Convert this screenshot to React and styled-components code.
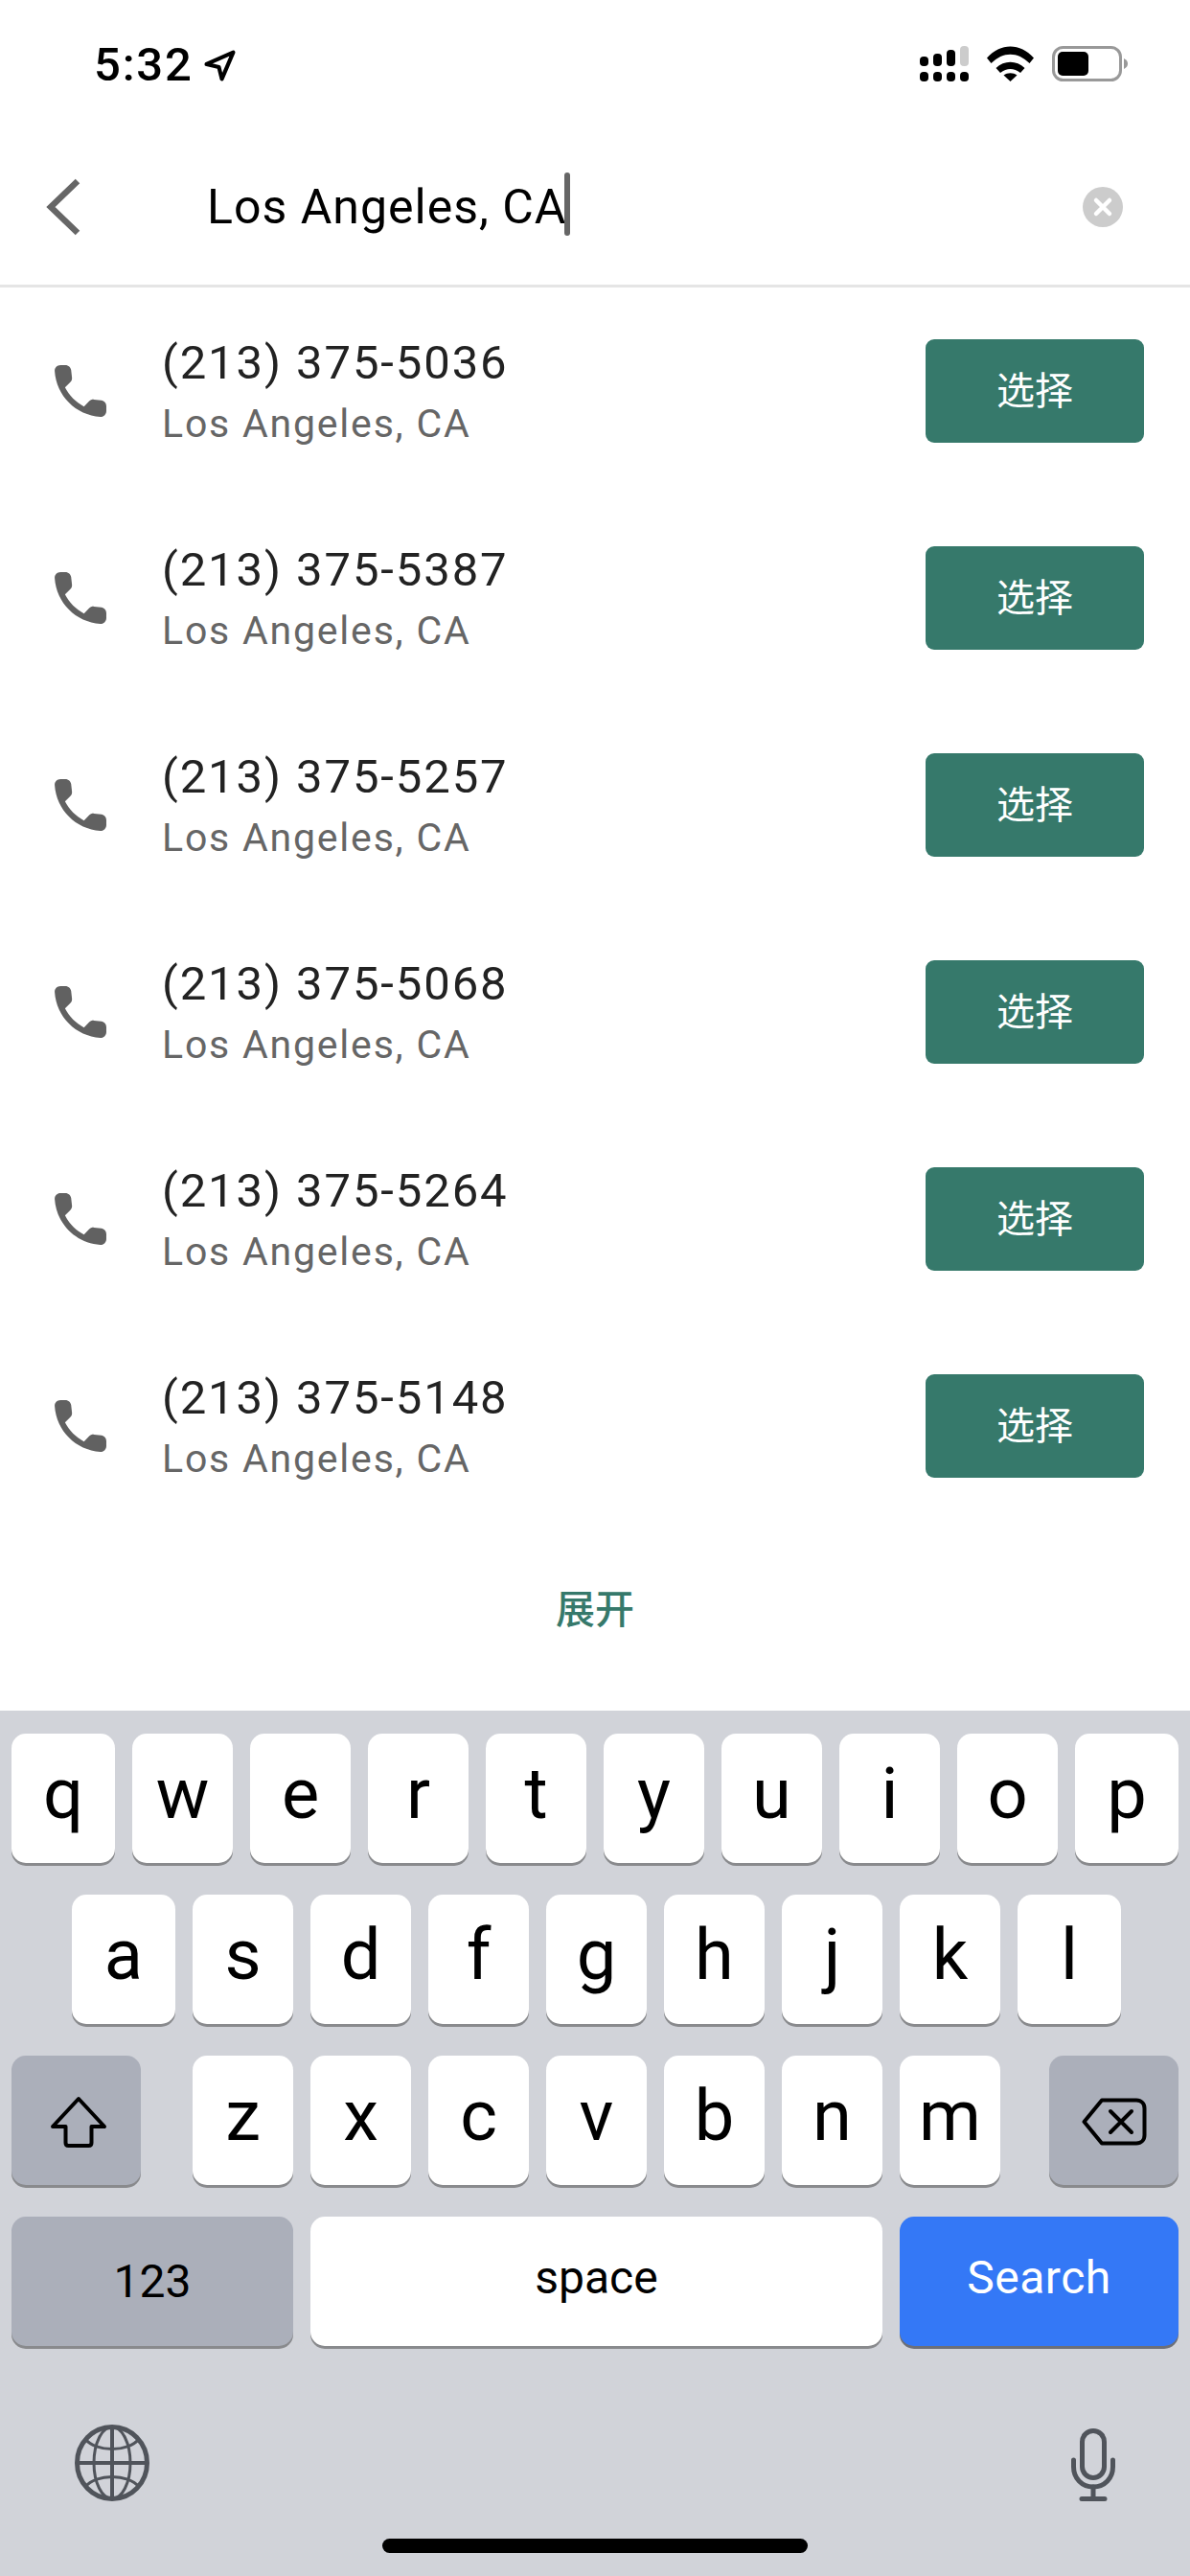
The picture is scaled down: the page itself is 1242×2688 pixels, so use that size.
import React from "react";
import styled, { createGlobalStyle } from "styled-components";

const Global = createGlobalStyle`
  html, body { margin: 0; padding: 0; background: #fff; }
  * { box-sizing: border-box; }
`;

const FONT = `Roboto, "Noto Sans CJK SC", sans-serif`;

const Screen = styled.div`
  width: 1242px;
  height: 2688px;
  display: flex;
  flex-direction: column;
  background: #fff;
  font-family: ${FONT};
  overflow: hidden;
`;

const StatusBar = styled.div`
  height: 134px;
  flex: none;
  padding: 0 65px 0 98px;
  display: flex;
  align-items: flex-start;
  justify-content: space-between;
`;
const TimeGroup = styled.div`
  display: flex;
  align-items: center;
  gap: 11px;
  margin-top: 41px;
  height: 54px;
`;
const Time = styled.span`
  font-size: 49px;
  font-weight: 500;
  line-height: 54px;
  color: #000;
  letter-spacing: 1.8px;
`;
const StatusIcons = styled.div`
  display: flex;
  align-items: flex-start;
  margin-top: 48px;
  gap: 19px;
`;

const Header = styled.div`
  height: 166px;
  flex: none;
  border-bottom: 3px solid #e5e5e5;
  display: flex;
  align-items: center;
  padding: 0 70px 0 48px;
`;
const SearchField = styled.div`
  flex: 1;
  margin-left: 132px;
  display: flex;
  align-items: center;
  font-size: 50px;
  line-height: 66px;
  letter-spacing: 1px;
  color: #000;
`;
const Caret = styled.span`
  width: 6px;
  height: 66px;
  border-radius: 3px;
  background: #666;
  flex: none;
  margin: 0 0 6px -2px;
`;

const List = styled.div`
  display: flex;
  flex-direction: column;
`;
const Row = styled.div`
  height: 216px;
  display: flex;
  align-items: center;
  padding: 0 48px;
`;
const Info = styled.div`
  flex: 1;
  margin-left: 49px;
  padding-top: 2px;
  display: flex;
  flex-direction: column;
  gap: 8px;
`;
const Phone = styled.div`
  font-size: 49px;
  line-height: 58px;
  color: #222;
  letter-spacing: 1.9px;
`;
const Place = styled.div`
  font-size: 41px;
  line-height: 52px;
  color: #666;
  letter-spacing: 1.8px;
`;
const Choose = styled.div`
  width: 228px;
  height: 108px;
  border-radius: 9px;
  background: #36796b;
  color: #fff;
  font-size: 40px;
  padding-bottom: 7px;
  display: flex;
  align-items: center;
  justify-content: center;
`;
const More = styled.div`
  flex: 1;
  display: flex;
  justify-content: center;
  padding-top: 54px;
  font-size: 41px;
  font-weight: 500;
  line-height: 60px;
  color: #36796b;
`;

const Keyboard = styled.div`
  height: 903px;
  flex: none;
  background: #d1d3d9;
  padding: 24px 12px 0;
  display: flex;
  flex-direction: column;
  gap: 33px;
`;
const KeyRow = styled.div`
  display: flex;
  gap: 18px;
  height: 135px;
  padding-left: ${(p) => p.$inset || 0}px;
`;
const Key = styled.div`
  width: ${(p) => p.$w || 105}px;
  margin-right: ${(p) => p.$after || 0}px;
  height: 135px;
  flex: none;
  border-radius: 15px;
  background: ${(p) => (p.$tone === "dark" ? "#abafba" : p.$tone === "blue" ? "#3478f6" : "#fff")};
  color: ${(p) => (p.$tone === "blue" ? "#fff" : "#000")};
  box-shadow: 0 3px 0 ${(p) => (p.$tone === "blue" ? "#6c6f78" : "#898a8d")};
  display: flex;
  align-items: center;
  justify-content: center;
  font-size: ${(p) => p.$size || 74}px;
  font-weight: 400;
  letter-spacing: ${(p) => p.$track || 0}px;
  line-height: 1;
  padding-bottom: ${(p) => p.$lift ?? 10}px;
`;
const BottomRow = styled.div`
  margin-top: 49px;
  height: 80px;
  display: flex;
  justify-content: space-between;
  align-items: flex-end;
  padding: 0 66px;
`;
const HomeBar = styled.div`
  width: 444px;
  height: 15px;
  border-radius: 8px;
  background: #000;
  align-self: center;
  margin-top: 6px;
`;

const LocationArrow = () => (
  <svg width="33" height="33" viewBox="0 0 32 32">
    <path d="M2.5 14.5 L29.5 2.5 L18 29.5 L15 17.5 Z" fill="none" stroke="#000" strokeWidth="4" strokeLinejoin="round" />
  </svg>
);

const Signal = () => (
  <svg width="51" height="37" viewBox="0 0 51 37">
    <rect x="0" y="11" width="9" height="10" rx="4" />
    <rect x="14" y="8" width="9" height="13" rx="4" />
    <rect x="28" y="4" width="9" height="17" rx="4" />
    <rect x="42" y="0" width="9" height="21" rx="4" fill="#ccc" />
    <rect x="0" y="27" width="9" height="10" rx="4" />
    <rect x="14" y="27" width="9" height="10" rx="4" />
    <rect x="28" y="27" width="9" height="10" rx="4" />
    <rect x="42" y="27" width="9" height="10" rx="4" />
  </svg>
);

const Wifi = () => (
  <svg width="49" height="37" viewBox="0 0 49 37">
    <path d="M0 12.5 C14 -3.5 35 -3.5 49 12.5 L44.5 18 C32 5.5 17 5.5 4.5 18 Z" />
    <path d="M9.5 23 C18 14.5 31 14.5 39.5 23 L35 28 C28 22.5 21 22.5 14 28 Z" />
    <path d="M17.5 30.5 C21.5 27.5 27.5 27.5 31.5 30.5 L24.5 37 Z" />
  </svg>
);

const Battery = () => (
  <svg width="79" height="37" viewBox="0 0 79 37">
    <rect x="1.5" y="1.5" width="70" height="34" rx="10" fill="none" stroke="#999" strokeWidth="3" />
    <rect x="6" y="6" width="32" height="25" rx="5" fill="#000" />
    <path d="M75 13 C78 14.5 79 16.5 79 18.5 C79 20.5 78 22.5 75 24 Z" fill="#999" />
  </svg>
);

const Back = () => (
  <svg width="36" height="60" viewBox="0 0 36 60">
    <path d="M33 3 L5 30 L33 57" fill="none" stroke="#666" strokeWidth="6.5" />
  </svg>
);

const Clear = () => (
  <svg width="42" height="42" viewBox="0 0 42 42">
    <circle cx="21" cy="21" r="21" fill="#ccc" />
    <path d="M14 14 L28 28 M28 14 L14 28" stroke="#fff" strokeWidth="4.5" strokeLinecap="round" />
  </svg>
);

const Call = () => (
  <svg width="72" height="72" viewBox="0 0 24 24" fill="#616161">
    <path d="M19.23 15.26l-2.54-.29c-.61-.07-1.21.14-1.64.57l-1.84 1.84c-2.83-1.44-5.15-3.75-6.59-6.59l1.85-1.85c.43-.43.64-1.03.57-1.64l-.29-2.52c-.12-1.01-.97-1.77-1.99-1.77H5.03c-1.13 0-2.07.94-2 2.07.53 8.54 7.36 15.36 15.89 15.89 1.13.07 2.07-.87 2.07-2v-1.73c.01-1.01-.75-1.86-1.76-1.98z" />
  </svg>
);

const Shift = () => (
  <svg width="64" height="58" viewBox="0 0 64 58">
    <path d="M34 6 L61 35 H47.5 V52 Q47.5 55 44.5 55 H23.5 Q20.5 55 20.5 52 V35 H7 Z" fill="none" stroke="#000" strokeWidth="4" strokeLinejoin="round" />
  </svg>
);

const Delete = () => (
  <svg width="68" height="53" viewBox="0 0 68 53">
    <path d="M21 5.5 H57 C62 5.5 65.5 9 65.5 14 V42 C65.5 47 62 50.5 57 50.5 H21 L2.5 28 Z" fill="none" stroke="#000" strokeWidth="4" strokeLinejoin="round" />
    <path d="M30 17 L52 39 M52 17 L30 39" stroke="#000" strokeWidth="4" strokeLinecap="round" />
  </svg>
);

const Globe = () => (
  <svg width="78" height="80" viewBox="0 0 78 80" fill="none" stroke="#50545b">
    <ellipse cx="39" cy="40" rx="36.5" ry="37.5" strokeWidth="5" />
    <ellipse cx="39" cy="40" rx="19" ry="37.5" strokeWidth="3" />
    <path d="M39 3 V77 M3 40 H75" strokeWidth="4" />
    <path d="M11 15 C22 29 56 29 67 15 M11 65 C22 51 56 51 67 65" strokeWidth="3" />
  </svg>
);

const Mic = () => (
  <svg width="46" height="76" viewBox="0 0 46 76" fill="none" stroke="#50545b" strokeWidth="5" strokeLinecap="round">
    <rect x="11.5" y="2.5" width="23" height="49" rx="11.5" />
    <path d="M2.5 33 V40 C2.5 52 11 61 23 61 C35 61 43.5 52 43.5 40 V33" />
    <path d="M23 61 V73 M11 73.5 H35" />
  </svg>
);

const numbers = ["5036", "5387", "5257", "5068", "5264", "5148"];
const rowOne = ["q", "w", "e", "r", "t", "y", "u", "i", "o", "p"];
const rowTwo = ["a", "s", "d", "f", "g", "h", "j", "k", "l"];
const rowThree = ["z", "x", "c", "v", "b", "n", "m"];

export default function App() {
  return (
    <Screen>
      <Global />
      <StatusBar>
        <TimeGroup>
          <Time>5:32</Time>
          <LocationArrow />
        </TimeGroup>
        <StatusIcons>
          <Signal />
          <Wifi />
          <Battery />
        </StatusIcons>
      </StatusBar>
      <Header>
        <Back />
        <SearchField>
          Los Angeles, CA
          <Caret />
        </SearchField>
        <Clear />
      </Header>
      <List>
        {numbers.map((n) => (
          <Row key={n}>
            <Call />
            <Info>
              <Phone>(213) 375-{n}</Phone>
              <Place>Los Angeles, CA</Place>
            </Info>
            <Choose>选择</Choose>
          </Row>
        ))}
      </List>
      <More>展开</More>
      <Keyboard>
        <KeyRow>
          {rowOne.map((k, i) => (
            <Key key={k} $w={i === 0 || i === 9 ? 108 : 105}>{k}</Key>
          ))}
        </KeyRow>
        <KeyRow $inset={63}>
          {rowTwo.map((k, i) => (
            <Key key={k} $w={i === 0 || i === 8 ? 108 : 105}>{k}</Key>
          ))}
        </KeyRow>
        <KeyRow>
          <Key $tone="dark" $w={135} $after={36} $lift={0}><Shift /></Key>
          {rowThree.map((k, i) => (
            <Key key={k} $after={i === 6 ? 33 : 0}>{k}</Key>
          ))}
          <Key $tone="dark" $w={135} $lift={0}><Delete /></Key>
        </KeyRow>
        <KeyRow>
          <Key $tone="dark" $w={294} $size={48} $lift={0}>123</Key>
          <Key $w={597} $size={48} $lift={8}>space</Key>
          <Key $tone="blue" $w={291} $size={48} $track={0.5} $lift={8}>Search</Key>
        </KeyRow>
        <BottomRow>
          <Globe />
          <Mic />
        </BottomRow>
        <HomeBar />
      </Keyboard>
    </Screen>
  );
}
